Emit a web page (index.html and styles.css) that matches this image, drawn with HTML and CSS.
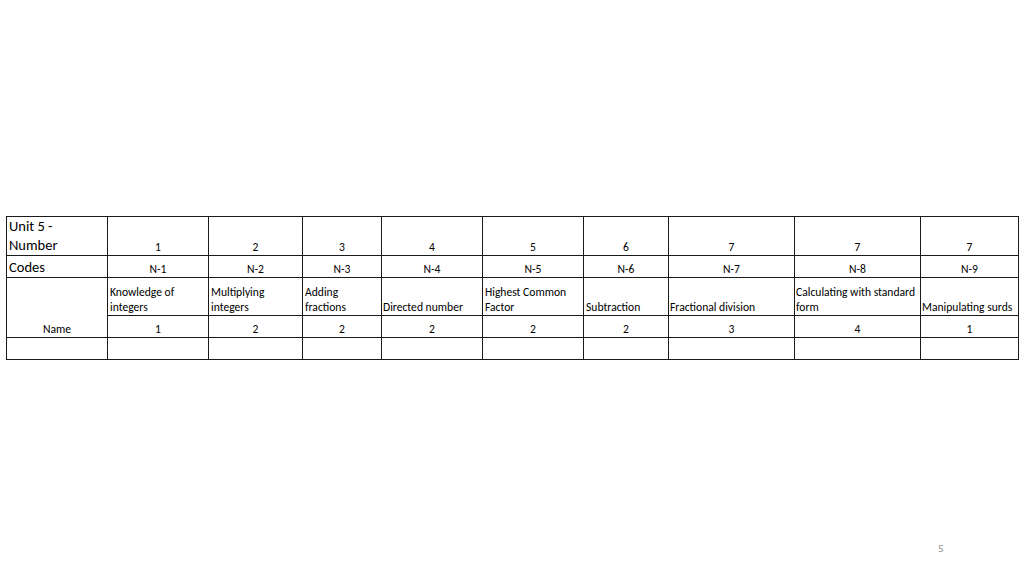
FILE: index.html
```html
<!DOCTYPE html>
<html>
<head>
<meta charset="utf-8">
<link rel="stylesheet" href="styles.css">
</head>
<body>
<div class="slide">
  <table class="grid">
    <colgroup>
      <col style="width:101px"><col style="width:101px"><col style="width:94px"><col style="width:79px"><col style="width:101px"><col style="width:101px"><col style="width:85px"><col style="width:126px"><col style="width:126px"><col style="width:98px">
    </colgroup>
    <tr class="r1">
      <td class="big">Unit 5 -<br>Number</td>
      <td class="c">1</td><td class="c">2</td><td class="c">3</td><td class="c">4</td><td class="c">5</td><td class="c">6</td><td class="c">7</td><td class="c">7</td><td class="c">7</td>
    </tr>
    <tr class="r2">
      <td class="big">Codes</td>
      <td class="c">N-1</td><td class="c">N-2</td><td class="c">N-3</td><td class="c">N-4</td><td class="c">N-5</td><td class="c">N-6</td><td class="c">N-7</td><td class="c">N-8</td><td class="c">N-9</td>
    </tr>
    <tr class="r3">
      <td class="c" rowspan="2">Name</td>
      <td>Knowledge of<br>integers</td><td>Multiplying<br>integers</td><td>Adding<br>fractions</td><td class="nw">Directed number</td><td>Highest Common<br>Factor</td><td>Subtraction</td><td class="nw">Fractional division</td><td class="nw">Calculating with standard<br>form</td><td class="nw">Manipulating surds</td>
    </tr>
    <tr class="r4">
      <td class="c">1</td><td class="c">2</td><td class="c">2</td><td class="c">2</td><td class="c">2</td><td class="c">2</td><td class="c">3</td><td class="c">4</td><td class="c">1</td>
    </tr>
    <tr class="r5">
      <td></td><td></td><td></td><td></td><td></td><td></td><td></td><td></td><td></td><td></td>
    </tr>
  </table>
  <div class="pagenum">5</div>
</div>
</body>
</html>
```
FILE: styles.css
```css
html, body {
  margin: 0;
  padding: 0;
  background: #fff;
}
.slide {
  width: 1024px;
  height: 576px;
  box-sizing: border-box;
  padding: 216px 0 0 6px;
  position: relative;
  font-family: Carlito, Lato, "Liberation Sans", sans-serif;
  color: #000;
}
.grid {
  border-collapse: collapse;
  table-layout: fixed;
  width: 1012px;
}
.grid td {
  border: 1px solid #1a1a1a;
  padding: 0 2px 0 2px;
  font-size: 11.6px;
  line-height: 15px;
  vertical-align: bottom;
  text-align: left;
  overflow: hidden;
  white-space: nowrap;
}
.grid td.c {
  text-align: center;
}
.grid td.big {
  font-size: 14.5px;
  line-height: 19px;
  padding-bottom: 0;
}
.grid td.nw {
  padding-left: 1px;
  padding-right: 0;
}
.r1 { height: 38px; }
.r2 { height: 22px; }
.r3 { height: 38px; }
.r4 { height: 22px; }
.r5 { height: 22px; }
.pagenum {
  position: absolute;
  left: 938px;
  top: 542px;
  font-size: 11px;
  color: #8c8c8c;
}
```
